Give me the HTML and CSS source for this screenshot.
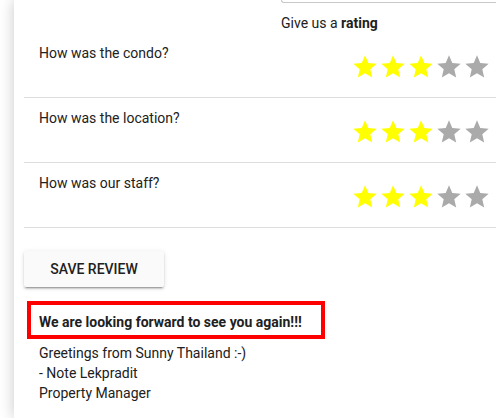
FILE: index.html
```html
<!DOCTYPE html>
<html>
<head>
<meta charset="utf-8">
<link rel="stylesheet" href="styles.css">
</head>
<body>
<div class="card">
  <div class="header">
    <div class="field-edge"></div>
    <div class="give">Give us a <b>rating</b></div>
  </div>
  <div class="row">
    <div class="question">How was the condo?</div>
    <div class="stars">
      <svg class="star on" viewBox="0 0 24 24"><path d="M12 17.27L18.18 21l-1.64-7.03L22 9.24l-7.19-.61L12 2 9.19 8.63 2 9.24l5.46 4.73L5.82 21z"/></svg>
      <svg class="star on" viewBox="0 0 24 24"><path d="M12 17.27L18.18 21l-1.64-7.03L22 9.24l-7.19-.61L12 2 9.19 8.63 2 9.24l5.46 4.73L5.82 21z"/></svg>
      <svg class="star on" viewBox="0 0 24 24"><path d="M12 17.27L18.18 21l-1.64-7.03L22 9.24l-7.19-.61L12 2 9.19 8.63 2 9.24l5.46 4.73L5.82 21z"/></svg>
      <svg class="star off" viewBox="0 0 24 24"><path d="M12 17.27L18.18 21l-1.64-7.03L22 9.24l-7.19-.61L12 2 9.19 8.63 2 9.24l5.46 4.73L5.82 21z"/></svg>
      <svg class="star off" viewBox="0 0 24 24"><path d="M12 17.27L18.18 21l-1.64-7.03L22 9.24l-7.19-.61L12 2 9.19 8.63 2 9.24l5.46 4.73L5.82 21z"/></svg>
    </div>
  </div>
  <div class="row">
    <div class="question">How was the location?</div>
    <div class="stars">
      <svg class="star on" viewBox="0 0 24 24"><path d="M12 17.27L18.18 21l-1.64-7.03L22 9.24l-7.19-.61L12 2 9.19 8.63 2 9.24l5.46 4.73L5.82 21z"/></svg>
      <svg class="star on" viewBox="0 0 24 24"><path d="M12 17.27L18.18 21l-1.64-7.03L22 9.24l-7.19-.61L12 2 9.19 8.63 2 9.24l5.46 4.73L5.82 21z"/></svg>
      <svg class="star on" viewBox="0 0 24 24"><path d="M12 17.27L18.18 21l-1.64-7.03L22 9.24l-7.19-.61L12 2 9.19 8.63 2 9.24l5.46 4.73L5.82 21z"/></svg>
      <svg class="star off" viewBox="0 0 24 24"><path d="M12 17.27L18.18 21l-1.64-7.03L22 9.24l-7.19-.61L12 2 9.19 8.63 2 9.24l5.46 4.73L5.82 21z"/></svg>
      <svg class="star off" viewBox="0 0 24 24"><path d="M12 17.27L18.18 21l-1.64-7.03L22 9.24l-7.19-.61L12 2 9.19 8.63 2 9.24l5.46 4.73L5.82 21z"/></svg>
    </div>
  </div>
  <div class="row">
    <div class="question">How was our staff?</div>
    <div class="stars">
      <svg class="star on" viewBox="0 0 24 24"><path d="M12 17.27L18.18 21l-1.64-7.03L22 9.24l-7.19-.61L12 2 9.19 8.63 2 9.24l5.46 4.73L5.82 21z"/></svg>
      <svg class="star on" viewBox="0 0 24 24"><path d="M12 17.27L18.18 21l-1.64-7.03L22 9.24l-7.19-.61L12 2 9.19 8.63 2 9.24l5.46 4.73L5.82 21z"/></svg>
      <svg class="star on" viewBox="0 0 24 24"><path d="M12 17.27L18.18 21l-1.64-7.03L22 9.24l-7.19-.61L12 2 9.19 8.63 2 9.24l5.46 4.73L5.82 21z"/></svg>
      <svg class="star off" viewBox="0 0 24 24"><path d="M12 17.27L18.18 21l-1.64-7.03L22 9.24l-7.19-.61L12 2 9.19 8.63 2 9.24l5.46 4.73L5.82 21z"/></svg>
      <svg class="star off" viewBox="0 0 24 24"><path d="M12 17.27L18.18 21l-1.64-7.03L22 9.24l-7.19-.61L12 2 9.19 8.63 2 9.24l5.46 4.73L5.82 21z"/></svg>
    </div>
  </div>
  <button class="save">SAVE REVIEW</button>
  <div class="highlight">We are looking forward to see you again!!!</div>
  <div class="signoff">
    <div>Greetings from Sunny Thailand :-)</div>
    <div>- Note Lekpradit</div>
    <div>Property Manager</div>
  </div>
</div>
</body>
</html>
```
FILE: styles.css
```css
html, body {
  margin: 0;
  padding: 0;
  height: 100%;
  overflow: hidden;
}
body {
  background: #ffffff;
  font-family: Roboto, "Liberation Sans", sans-serif;
  font-size: 14px;
  line-height: 20px;
  color: #212121;
}
.card {
  margin-left: 14px;
  margin-right: -20px;
  min-height: 100%;
  padding-left: 10px;
  padding-right: 20px;
  background: #ffffff;
  box-shadow: 0 0 14px rgba(0, 0, 0, 0.22);
}
.header {
  padding-left: 257px;
}
.field-edge {
  height: 2px;
  border: 1px solid #c8c8c8;
  border-top: none;
  border-right: none;
  border-radius: 0 0 0 4px;
}
.give {
  margin-top: 10px;
  height: 20px;
}
.give b {
  font-weight: 700;
}
.row {
  display: flex;
  justify-content: space-between;
  align-items: flex-start;
  padding: 10px 5px 0 15px;
  box-sizing: border-box;
  height: 65px;
  border-bottom: 1px solid #dddddd;
}
.stars {
  display: flex;
  margin-top: 10px;
}
.star {
  width: 28px;
  height: 28px;
  display: block;
}
.star.on { fill: #ffff00; }
.star.off { fill: #aaaaaa; }
.save {
  display: block;
  margin-top: 23px;
  width: 140px;
  height: 36px;
  padding: 0;
  border: none;
  border-radius: 2px;
  background: #fafafa;
  font-family: Roboto, "Liberation Sans", sans-serif;
  font-size: 14px;
  font-weight: 500;
  color: #212121;
  box-shadow: 0 2px 2px rgba(0, 0, 0, 0.14), 0 1px 5px rgba(0, 0, 0, 0.12), 0 3px 1px -2px rgba(0, 0, 0, 0.2);
}
.highlight {
  margin-top: 14px;
  margin-left: 3px;
  width: 298px;
  box-sizing: border-box;
  border: 4px solid #ff0000;
  padding: 7px 8px 3px 8px;
  font-weight: 700;
}
.signoff {
  margin-top: 4px;
  padding-left: 15px;
}
```
